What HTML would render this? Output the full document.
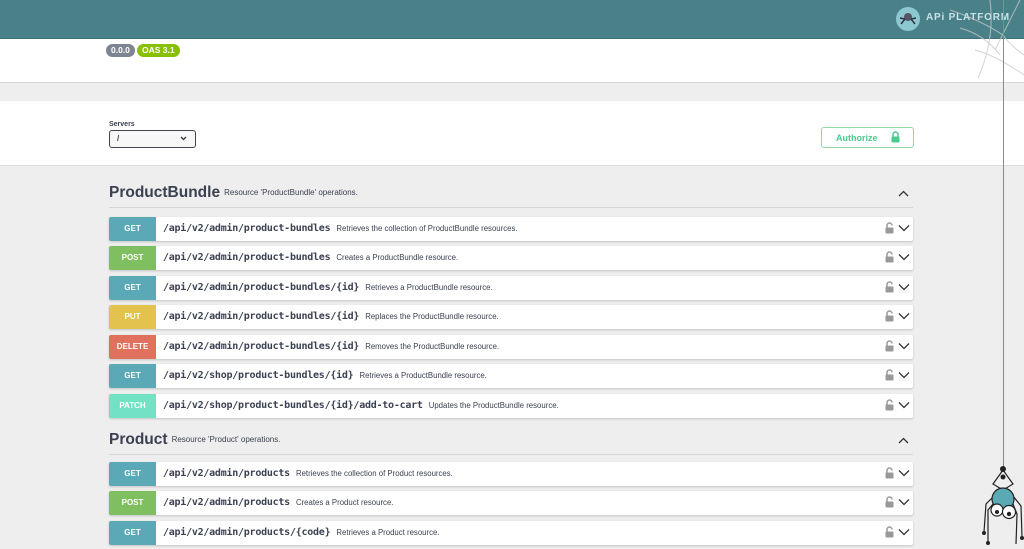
<!DOCTYPE html>
<html><head><meta charset="utf-8"><style>
*{box-sizing:border-box;margin:0;padding:0}
body{width:1024px;height:549px;overflow:hidden;background:#eeeeee;font-family:"Liberation Sans",sans-serif;position:relative}
.hdr{position:absolute;left:0;top:0;width:1024px;height:39px;background:#4a8189;border-bottom:1px solid #3e7078}
.info{position:absolute;left:0;top:39px;width:1024px;height:44px;background:#fff;border-bottom:1px solid #d8d8d8}
.badge{position:absolute;top:44px;height:13px;border-radius:7px;color:#fff;font-size:8.5px;font-weight:bold;line-height:13px;padding:0 5px}
.srv{position:absolute;left:0;top:101px;width:1024px;height:65px;background:#fff;border-bottom:1px solid #dcdcdc}
.lbl{position:absolute;left:109px;top:121px;font-size:7px;font-weight:bold;color:#3b4151}
.sel{position:absolute;left:109px;top:130px;width:87px;height:18px;border:1.5px solid #41444e;border-radius:3px;background:#f7f7f7;font-size:8px;font-weight:bold;padding:3px 7px;color:#3b4151}
.auth{position:absolute;left:821px;top:127px;width:93px;height:21px;border:1.5px solid #8fd9a8;border-radius:3px;color:#49cc90;font-size:9px;font-weight:bold;padding:5px 0 0 14px}
.tag{position:absolute;left:109px;width:804px;border-bottom:1px solid #d6d6d6;height:24px}
.tag b{font-size:15.5px;color:#3b4151}
.tag span{font-size:8px;color:#3b4151;margin-left:4px;vertical-align:2px}
.op{position:absolute;left:109px;width:804px;height:24px;background:#fff;box-shadow:0 1px 2px rgba(0,0,0,.18);border-radius:2px}
.m{position:absolute;left:0;top:0;width:47px;height:24px;color:#fff;font-size:8px;font-weight:bold;text-align:center;line-height:24px;border-radius:2px 0 0 2px}
.p{position:absolute;left:54px;top:6px;font-family:"DejaVu Sans Mono","Liberation Mono",monospace;font-size:10px;font-weight:bold;color:#3b4151;letter-spacing:-.25px;white-space:nowrap}
.p i{font-style:normal;font-family:"Liberation Sans",sans-serif;font-weight:normal;font-size:7.8px;margin-left:6px;letter-spacing:0}
.lk{position:absolute;right:19px;top:5px}
.cv{position:absolute;right:3px;top:7px}
</style></head><body>
<div class="hdr"></div>
<svg style="position:absolute;left:893px;top:4px" width="30" height="30"><circle cx="15" cy="15" r="12" fill="#8cc8d0"/><circle cx="15" cy="13" r="4" fill="#556"/><path d="M8 20l4-5M22 20l-4-5M7 14l5 1M23 14l-5 1" stroke="#334" stroke-width="1.5"/></svg>
<div style="position:absolute;left:926px;top:12px;color:#c8e3e6;font-size:10px;font-weight:bold;letter-spacing:.8px">APi PLATFORM</div>
<div class="info"></div>
<svg style="position:absolute;left:950px;top:0" width="74" height="80"><g stroke="#c9c9c9" fill="none" stroke-width="1" opacity=".8"><path d="M40 0 Q45 40 28 78"/><path d="M70 0 L45 50"/><path d="M0 10 Q30 20 53 35 Q60 45 74 55"/><path d="M10 28 Q35 35 50 55"/><path d="M25 50 Q45 55 74 75"/></g></svg>
<div class="badge" style="left:106px;background:#7d8492">0.0.0</div>
<div class="badge" style="left:137px;background:#89bf04">OAS 3.1</div>
<div class="srv"></div>
<div class="lbl">Servers</div>
<div class="sel">/<svg style="position:absolute;right:8px;top:5px" width="7" height="5"><path d="M1 1l2.5 2.5L6 1" stroke="#333" stroke-width="1.3" fill="none"/></svg></div>
<div class="auth">Authorize<svg style="position:absolute;right:13px;top:3px" width="9" height="12"><path d="M2 6V3.5a2.5 2.5 0 0 1 5 0V6" stroke="#49cc90" stroke-width="1.5" fill="none"/><rect x="0.5" y="5.5" width="8" height="6" rx="1" fill="#49cc90"/></svg></div>
<div style="position:absolute;left:1003px;top:0;width:1px;height:468px;background:#8a8a8a"></div>

<div class="tag" style="top:184px"><b>ProductBundle</b><span>Resource 'ProductBundle' operations.</span><svg style="position:absolute;right:4px;top:6px" width="11" height="7"><path d="M1 6l4.5-4.5L10 6" stroke="#333" stroke-width="1.3" fill="none"/></svg></div>
<div class="tag" style="top:431px"><b>Product</b><span>Resource 'Product' operations.</span><svg style="position:absolute;right:4px;top:6px" width="11" height="7"><path d="M1 6l4.5-4.5L10 6" stroke="#333" stroke-width="1.3" fill="none"/></svg></div>

<div id="ops"></div>
<script>
var C={GET:"#5ba8b6",POST:"#7fbf60",PUT:"#e3c24d",DELETE:"#e0715f",PATCH:"#73e2c4"};
var R=[[217,"GET","/api/v2/admin/product-bundles","Retrieves the collection of ProductBundle resources."],
[246,"POST","/api/v2/admin/product-bundles","Creates a ProductBundle resource."],
[276,"GET","/api/v2/admin/product-bundles/{id}","Retrieves a ProductBundle resource."],
[305,"PUT","/api/v2/admin/product-bundles/{id}","Replaces the ProductBundle resource."],
[335,"DELETE","/api/v2/admin/product-bundles/{id}","Removes the ProductBundle resource."],
[364,"GET","/api/v2/shop/product-bundles/{id}","Retrieves a ProductBundle resource."],
[394,"PATCH","/api/v2/shop/product-bundles/{id}/add-to-cart","Updates the ProductBundle resource."],
[462,"GET","/api/v2/admin/products","Retrieves the collection of Product resources."],
[491,"POST","/api/v2/admin/products","Creates a Product resource."],
[521,"GET","/api/v2/admin/products/{code}","Retrieves a Product resource."]];
var h="";R.forEach(function(r){h+='<div class="op" style="top:'+r[0]+'px"><div class="m" style="background:'+C[r[1]]+'">'+r[1]+'</div><div class="p">'+r[2]+'<i>'+r[3]+'</i></div><svg class="lk" width="9" height="12"><path d="M2 6V3.5a2.5 2.5 0 0 1 5 0" stroke="#999" stroke-width="1.5" fill="none"/><rect x="0.5" y="5.5" width="8" height="6" rx="1" fill="#999"/></svg><svg class="cv" width="12" height="8"><path d="M1 1.5l5 5 5-5" stroke="#333" stroke-width="1.3" fill="none"/></svg></div>';});
document.getElementById("ops").innerHTML=h;
</script>
<svg style="position:absolute;left:975px;top:462px" width="49" height="87">
<g stroke="#222" stroke-width="1.2" fill="none">
<path d="M28 8 L18 22 L28 28 L38 22 Z"/>
<path d="M19 34 L11 42 L9 70 M18 42 L13 48 L13 80 M38 34 L46 44 L47 75 M38 42 L42 52 L41 82"/>
</g>
<circle cx="28" cy="7" r="3" fill="#222"/><circle cx="28" cy="15" r="2.5" fill="#222"/>
<circle cx="28" cy="37" r="11" fill="#5aa9b5" stroke="#222" stroke-width="1.2"/>
<circle cx="22" cy="48" r="6" fill="#fff" stroke="#222" stroke-width="1.2"/><circle cx="34" cy="50" r="6.5" fill="#fff" stroke="#222" stroke-width="1.2"/>
<circle cx="22" cy="50" r="2" fill="#222"/><circle cx="34" cy="52" r="2.2" fill="#222"/>
<circle cx="9" cy="71" r="2" fill="#222"/><circle cx="13" cy="81" r="2" fill="#222"/><circle cx="47" cy="76" r="2" fill="#222"/>
</svg>
</body></html>
